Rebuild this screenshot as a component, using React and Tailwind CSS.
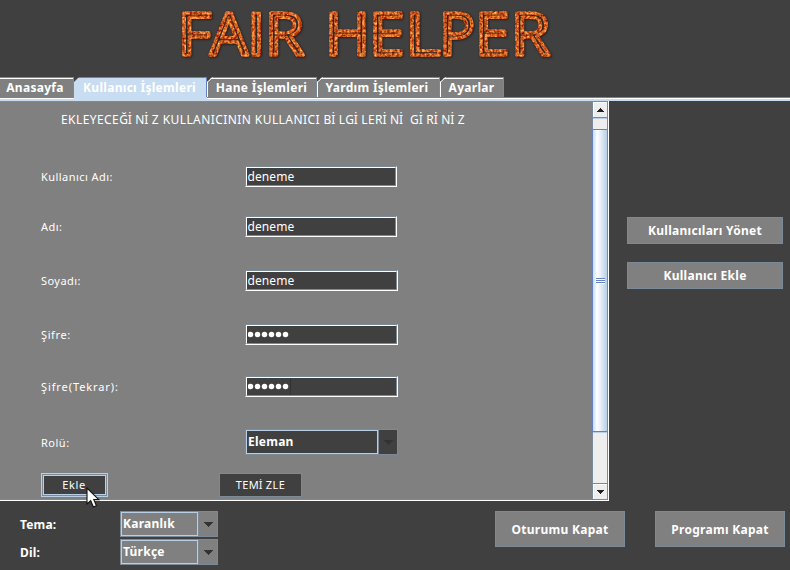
import React from "react";

const LETTERS = [
  ["F", 184, 25],
  ["A", 210, 38],
  ["I", 253.5, 5.5],
  ["R", 271, 33],
  ["H", 331, 33],
  ["E", 375, 27],
  ["L", 412, 26],
  ["P", 445, 27],
  ["E", 481, 26],
  ["R", 517, 33],
];

// Ink extents of each capital in Open Sans, in em: [left bearing, ink width]
const INK = {
  F: [0.098, 0.385],
  A: [0, 0.633],
  I: [0.098, 0.083],
  R: [0.098, 0.515],
  H: [0.098, 0.541],
  E: [0.098, 0.418],
  L: [0.098, 0.387],
  P: [0.098, 0.456],
};

function Logo() {
  const size = 58;
  return (
    <svg width="790" height="77" viewBox="0 0 790 77" className="block shrink-0 overflow-visible">
      <defs>
        <filter id="rust" x="0" y="0" width="790" height="77" filterUnits="userSpaceOnUse" colorInterpolationFilters="sRGB">
          <feTurbulence type="fractalNoise" baseFrequency="0.4" numOctaves="2" seed="4" result="n" />
          <feColorMatrix
            in="n"
            type="matrix"
            values="0.8 0 0 0 0.42  1.15 0.1 0 0 -0.24  0.7 0 0 0 -0.21  0 0 0 0 1"
            result="c"
          />
          <feComposite in="c" in2="SourceAlpha" operator="in" result="t" />
          <feDropShadow in="t" dx="0.7" dy="0.7" stdDeviation="0.8" floodColor="#1b0d06" floodOpacity="0.8" />
        </filter>
      </defs>
      <g
        filter="url(#rust)"
        fill="none"
        stroke="#d9581c"
        strokeWidth="3.4"
        strokeLinejoin="round"
        fontFamily="'Open Sans', sans-serif"
        fontSize={size}
      >
        {LETTERS.map(([ch, x, w], i) => {
          const [lsb, ink] = INK[ch];
          const s = w / (ink * size);
          return (
            <text key={i} transform={`translate(${x - lsb * size * s} 54.8) scale(${s} 1)`}>
              {ch}
            </text>
          );
        })}
      </g>
    </svg>
  );
}

function Tab({ children, w, selected, first, pad = "" }) {
  return (
    <div
      className={
        "relative h-5 shrink-0 border-t border-r pt-px " +
        (selected ? "border-[#6382bf] bg-[#c8ddf2] " : "border-[#7a8a99] bg-[#808080] ") +
        w
      }
    >
      <div
        className={
          "h-full border-l text-center text-xs leading-[18px] font-bold tracking-[0.3px] whitespace-nowrap text-white " +
          (first ? "border-transparent " : selected ? "border-[#c8ddf2] " : "border-white ") +
          pad
        }
      >
        {children}
      </div>
      {!selected && <div className="absolute top-0 right-0 left-0 h-px bg-white" />}
      {!first && (
        <svg className="absolute -top-px left-0" width="6" height="6">
          <path d="M0 0H5L0 5Z" fill="#404040" />
          {!selected && <path d="M0 5.5L5.5 0.5" stroke="#fff" />}
        </svg>
      )}
    </div>
  );
}

// The dotted capital I carries extra advance in the form's regular face.
function Spaced({ text }) {
  return text.split(/(İ)/).map((p, i) =>
    p === "İ" ? (
      <span key={i} className="-ml-[0.5px] mr-[3px]">
        İ
      </span>
    ) : (
      <React.Fragment key={i}>{p}</React.Fragment>
    )
  );
}

function Field({ label, track = "tracking-[0.45px]", w, gap, value, caret }) {
  return (
    <div className={"flex h-[21px] items-center " + gap}>
      <div className={"w-[204px] text-[11px] leading-[21px] text-white " + track}>{label}</div>
      <div className={"h-[21px] border border-t-[#7a8a99] border-r-white border-b-white border-l-[#7a8a99] " + w}>
        <div className="flex h-full items-center border border-t-white border-r-[#7a8a99] border-b-[#7a8a99] border-l-white bg-[#404040] pl-px text-xs text-white">
          {value ? (
            <span className="-ml-[0.5px] tracking-[0.1px]">{value}</span>
          ) : (
            <svg width="41" height="7" fill="#fff">
              {[0, 1, 2, 3, 4, 5].map((i) => (
                <circle key={i} cx={2.5 + i * 7} cy="3.5" r="2.75" />
              ))}
            </svg>
          )}
          {caret && <span className="ml-px h-full w-px bg-[#333]" />}
        </div>
      </div>
    </div>
  );
}

function Combo({ text, dark, className }) {
  return (
    <div className={"flex border border-[#7a8a99] " + (dark ? "bg-[#404040] " : "bg-[#808080] ") + className}>
      <div className="flex-1 border border-[#b8cfe5] pl-px text-xs leading-[21px] font-bold tracking-[0.25px] text-white">
        {text}
      </div>
      <div className="flex w-[19px] items-center justify-center border-l border-[#7a8a99]">
        <svg width="10" height="5" className="mt-px" shapeRendering="crispEdges">
          <path d="M0 0H10L5 5Z" fill="#333" />
        </svg>
      </div>
    </div>
  );
}

function Button({ children, className }) {
  return (
    <button
      className={
        "flex items-center justify-center border border-[#7a8a99] bg-[#808080] text-xs font-bold tracking-[0.28px] whitespace-nowrap text-white " +
        className
      }
    >
      {children}
    </button>
  );
}

function ScrollButton({ up }) {
  return (
    <div className="flex h-[15px] items-center justify-center border-t border-l border-white bg-[#eee]">
      <svg width="8" height="4" shapeRendering="crispEdges" className="mr-px">
        <path d={up ? "M0 4H8L4 0Z" : "M0 0H8L4 4Z"} fill="#222" />
      </svg>
    </div>
  );
}

export default function App() {
  return (
    <div className="relative flex h-[570px] w-[790px] flex-col overflow-hidden bg-[#404040] font-['Noto_Sans','Open_Sans',sans-serif]">
      <Logo />
      <div className="flex h-5 shrink-0">
        <Tab w="w-[74px]" first pad="pr-[4px]">Anasayfa</Tab>
        <Tab w="w-[133px]" selected pad="pr-[2px]">Kullanıcı İşlemleri</Tab>
        <Tab w="w-[110px]" pad="pr-px">Hane İşlemleri</Tab>
        <Tab w="w-[123px]" pad="pr-[3px]">Yardım İşlemleri</Tab>
        <Tab w="w-[64px]" pad="pr-px">Ayarlar</Tab>
      </div>
      <div className="flex h-[2px] shrink-0">
        <div className="w-[74px] border-t border-b border-t-[#6382bf] border-b-white" />
        <div className="w-[133px] bg-[#c8ddf2]" />
        <div className="flex-1 border-t border-b border-t-[#6382bf] border-b-white" />
      </div>
      <div className="h-[2px] shrink-0 bg-[#c8ddf2]" />

      <div className="flex h-[400px] shrink-0">
        <div className="flex w-[609px] border-r border-b border-white">
          <div className="flex w-full border-t border-r border-b border-[#7a8a99] bg-[#808080]">
            <div className="w-[592px] shrink-0 pl-[41px]">
              <div className="mt-[8px] ml-5 h-5 text-xs leading-5 tracking-[0.42px] whitespace-pre text-white">
                <Spaced text="EKLEYECEĞİNİZ KULLANICININ KULLANICI BİLGİLERİNİ GİRİNİZ" />
              </div>
              <Field label="Kullanıcı Adı:" w="w-[152px]" gap="mt-[36px]" value="deneme" />
              <Field label="Adı:" w="w-[152px]" gap="mt-[29px]" value="deneme" />
              <Field label="Soyadı:" w="w-[153px]" gap="mt-[33px]" value="deneme" />
              <Field label="Şifre:" w="w-[153px]" gap="mt-[33px]" track="tracking-[0.6px]" />
              <Field label="Şifre(Tekrar):" w="w-[153px]" gap="mt-[31px]" track="tracking-[0.9px]" caret />
              <div className="mt-[32px] flex h-[26px] items-center">
                <div className="w-[204px] pt-[2px] text-[11px] tracking-[0.5px] text-white">Rolü:</div>
                <Combo dark text="Eleman" className="h-[26px] w-[153px]" />
              </div>
              <div className="mt-[18px] flex h-6">
                <button className="h-6 w-[67px] border border-[#b8cfe5] bg-[#7a8a99] p-px">
                  <span className="block h-full border border-[#b8cfe5] bg-[#404040] pr-px text-[11px] leading-[18px] tracking-[0.6px] text-white">
                    Ekle
                  </span>
                </button>
                <button className="ml-[111px] h-6 w-[83px] border border-[#7a8a99] bg-[#404040] text-[11px] leading-[22px] tracking-[0.4px] text-white">
                  <Spaced text="TEMİZLE" />
                </button>
              </div>
            </div>
            <div className="flex flex-1 flex-col border-l border-[#7a8a99] bg-[#eee]">
              <ScrollButton up />
              <div className="h-[2px] border-t border-b border-t-[#7a8a99] border-b-[#b8cfe5]" />
              <div className="h-[10px]" />
              <div className="-ml-px flex h-[303px] items-center justify-center border border-r-0 border-[#6382bf] bg-linear-to-r from-[#c8ddf2] via-white via-30% to-[#b8cfe5]">
                <div className="flex flex-col bg-white pb-px">
                  <div className="h-px w-[9px] bg-[#6382bf]" />
                  <div className="mt-px h-px w-[9px] bg-[#6382bf]" />
                  <div className="mt-px h-px w-[9px] bg-[#6382bf]" />
                </div>
              </div>
              <div className="h-px bg-[#b8cfe5]" />
              <div className="h-[50px]" />
              <div className="h-px bg-[#7a8a99]" />
              <ScrollButton />
            </div>
          </div>
        </div>
        <div className="flex flex-col gap-[18px] pt-[116px] pl-[18px]">
          <Button className="h-[27px] w-[156px]">Kullanıcıları Yönet</Button>
          <Button className="h-[27px] w-[156px]">Kullanıcı Ekle</Button>
        </div>
      </div>

      <div className="flex pt-[10px] pl-5">
        <div className="flex w-[100px] flex-col gap-[2px] pt-px text-xs leading-[26px] font-bold tracking-[0.15px] text-white">
          <div className="h-[26px]">Tema:</div>
          <div className="h-[26px]">Dil:</div>
        </div>
        <div className="flex flex-col gap-[2px]">
          <Combo text="Karanlık" className="h-[26px] w-[98px]" />
          <Combo text="Türkçe" className="h-[26px] w-[98px]" />
        </div>
        <Button className="ml-[277px] h-9 w-[130px] pt-px">Oturumu Kapat</Button>
        <Button className="ml-[30px] h-9 w-[130px] pt-px">Programı Kapat</Button>
      </div>

      <svg className="absolute top-[487px] left-[86px]" width="16" height="22" viewBox="0 0 16 22">
        <path d="M1 1V17L4.7 13.6L7.4 20L10.4 18.7L7.8 12.6H12.8Z" fill="#fff" stroke="#111" strokeWidth="1.1" />
      </svg>
    </div>
  );
}
